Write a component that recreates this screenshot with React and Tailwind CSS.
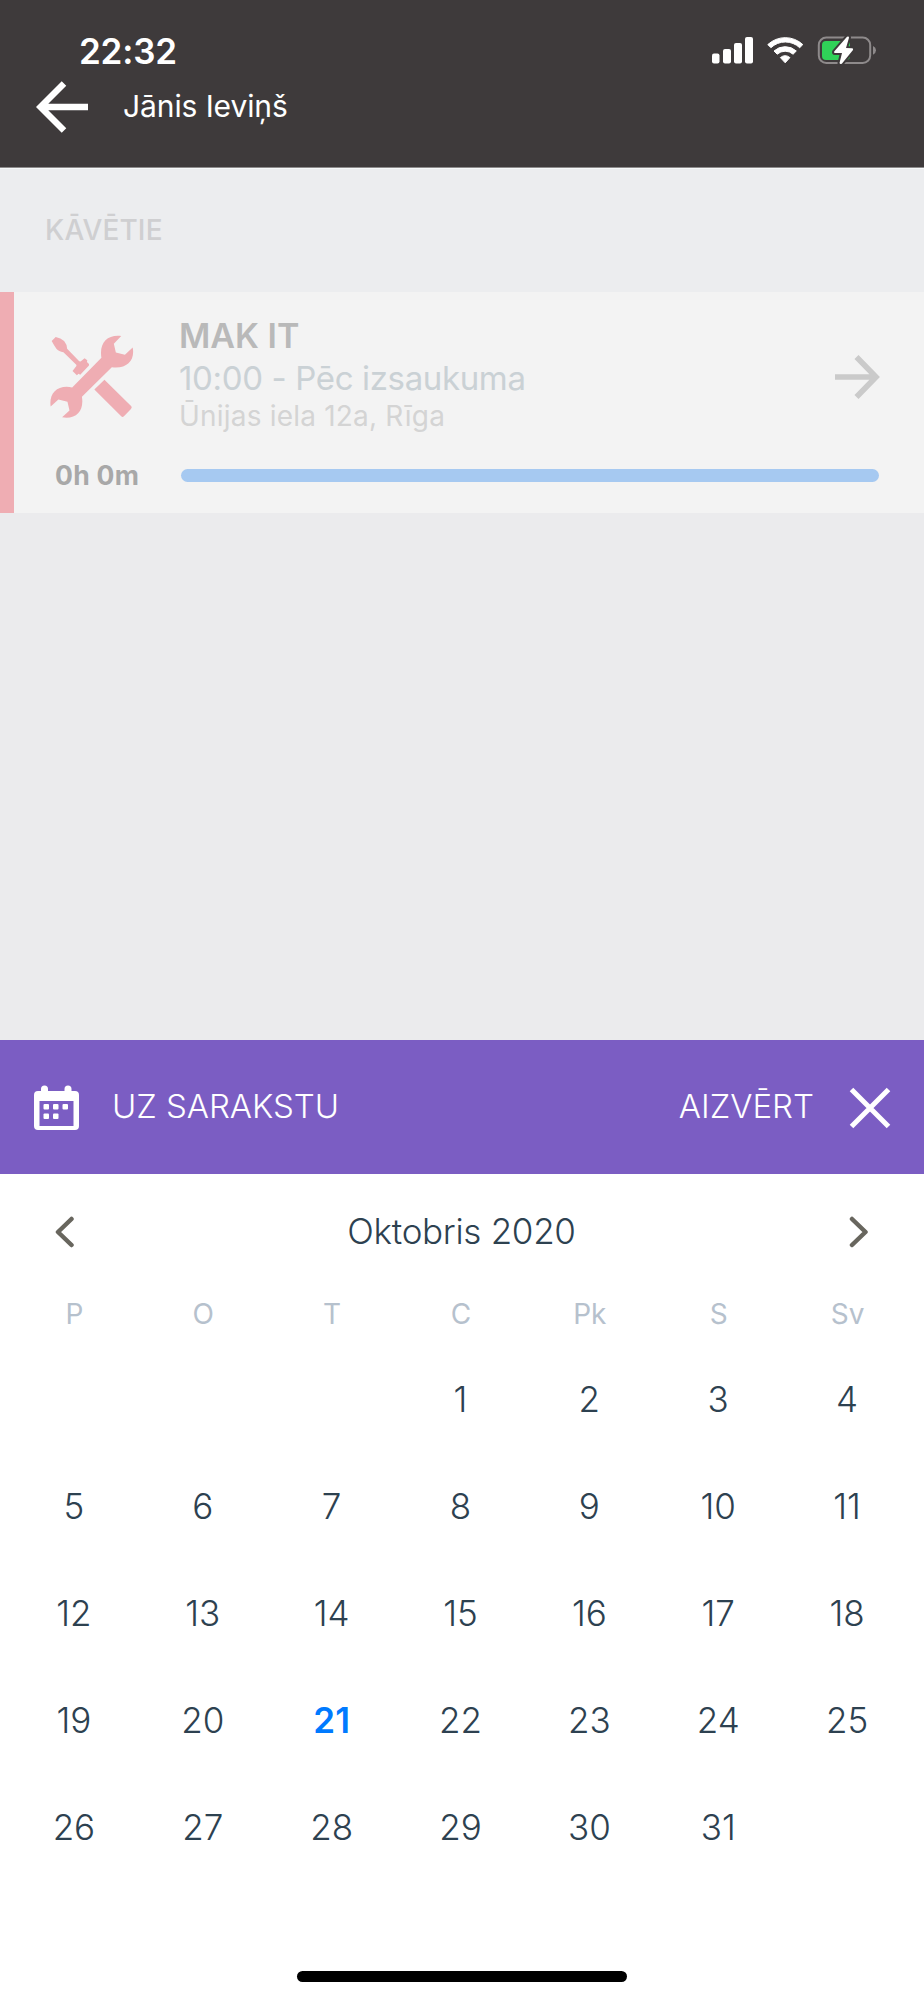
const weekdays = ['P', 'O', 'T', 'C', 'Pk', 'S', 'Sv'];
const days = [null, null, null, ...Array.from({ length: 31 }, (_, i) => i + 1), null];

function StatusIcons() {
  return (
    <svg className="h-[30px] w-[166px]" viewBox="711 36 166 30" fill="none">
      <g fill="#fff">
        <rect x="712" y="53.5" width="7.5" height="10" rx="2" />
        <rect x="723" y="49" width="8" height="14.5" rx="2" />
        <rect x="734" y="43" width="8" height="20.5" rx="2" />
        <rect x="745" y="37" width="8" height="26.5" rx="2" />
      </g>
      <path d="M767.8 44.6 A25.5 25.5 0 0 1 802.8 44.6 L799.7 47.7 A21 21 0 0 0 770.9 47.7 Z" fill="#fff" stroke="#fff" strokeWidth="1" strokeLinejoin="round" />
      <path d="M774 51 A16.5 16.5 0 0 1 796.3 51 L793.1 54.2 A12 12 0 0 0 777.2 54.2 Z" fill="#fff" stroke="#fff" strokeWidth="1" strokeLinejoin="round" />
      <path d="M780.4 57.6 A7.5 7.5 0 0 1 789.9 57.6 L785.2 62.8 Z" fill="#fff" stroke="#fff" strokeWidth="1" strokeLinejoin="round" />
      <rect x="818.8" y="37.6" width="51.4" height="25.4" rx="7.5" stroke="#8e8a8b" strokeWidth="2" />
      <path d="M873 46 Q876 47.5 876 50.3 Q876 53.2 873 54.7 Z" fill="#8e8a8b" />
      <rect x="822" y="41" width="28" height="19" rx="4" fill="#30d158" />
      <path d="M847 36.8 L834.2 51.6 Q833.6 53 835 53 L842 53 L839.500 63 Q840.2 64.6 842 63.4 L853 50 Q853.4 48.4 852 48.2 L846 48 L849 37.8 Q849 35.8 847 36.8 Z" fill="#fff" stroke="#3e3a3b" strokeWidth="4" paintOrder="stroke" />
    </svg>
  );
}

function ToolsIcon() {
  return (
    <svg className="h-[84px] w-[84px]" viewBox="150 166 250 250" fill="#efadb3">
      <path d="M216 322 L303 234 C296 190 320 164 362 169 L340 192 L346 218 L373 225 L396 203 C404 242 378 268 334 262 L245 350 C252 392 228 418 186 411 L208 391 L202 365 L175 358 L152 379 C146 340 172 313 216 322 Z" />
      <path d="M155 184 L167 172 Q182 175 192 184 Q201 195 201 207 L237 244 L241 245 L253 235 L261 241 L260 246 L266 252 L266 257 L240 284 L235 281 L230 286 L217 273 L228 259 L229 255 L190 217 Q176 216 169 207 Q162 197 155 184 Z" />
      <path d="M312 299 L392 378 Q395 382 391 386 L370 408 Q366 412 362 408 L282 328 Z" />
    </svg>
  );
}

export default function App() {
  return (
    <div className="flex h-[2000px] w-[924px] flex-col overflow-hidden bg-white font-['Inter','Liberation_Sans',sans-serif]">
      <header className="h-[168px] shrink-0 border-b border-[#8d8b8c] bg-[#3e3a3b] pt-[29px] text-white">
        <div className="flex h-[44px] items-center justify-between pr-[47px] pl-[79px]">
          <span className="text-[35px] leading-[44px] font-semibold tracking-[-0.2px]">22:32</span>
          <StatusIcons />
        </div>
        <div className="flex h-[68px] items-center pl-[36px]">
          <svg className="h-[54px] w-[54px]" viewBox="0 0 54 54" fill="none" stroke="#fff" strokeWidth="6.4">
            <path d="M28 3.500 L4.500 27 L28 50.500 M4.500 27 H52" />
          </svg>
          <span className="mb-[3px] ml-[33px] text-[30px] leading-[40px] tracking-[-0.1px] whitespace-nowrap">Jānis Ieviņš</span>
        </div>
      </header>

      <section className="flex h-[124px] shrink-0 items-center border-t border-[#f6f8f9] bg-[#ecedef] pb-[2px] pl-[45px]">
        <h2 className="text-[28px] leading-[36px] font-medium tracking-[0.15px] text-[#cfcfd1]">KĀVĒTIE</h2>
      </section>

      <article className="flex h-[221px] shrink-0 border-l-[14px] border-[#efadb3] bg-[#f3f3f3] pt-[23px]">
        <div className="flex w-[165px] flex-col items-start">
          <div className="mt-[20px] ml-[36px]"><ToolsIcon /></div>
          <span className="mt-[39px] ml-[41px] text-[26.500px] leading-[34px] font-bold tracking-[0.3px] whitespace-nowrap text-[#a8a8a8]">0h 0m</span>
        </div>
        <div className="flex w-[701px] flex-col">
          <div className="flex items-center justify-between">
            <div className="flex flex-col whitespace-nowrap">
              <span className="text-[34px] leading-[42px] font-semibold text-[#b9b9b9]">MAK IT</span>
              <span className="text-[33px] leading-[42px] tracking-[-0.36px] text-[#cad1d5]">10:00 - Pēc izsaukuma</span>
              <span className="text-[28px] leading-[34px] tracking-[0.2px] text-[#d4d4d4]">Ūnijas iela 12a, Rīga</span>
            </div>
            <svg className="mt-[5px] h-[46px] w-[46px]" viewBox="0 0 46 46" fill="none" stroke="#cacaca" strokeWidth="5.6">
              <path d="M22.500 3 L42 23 L22.500 43 M1 23 H42" />
            </svg>
          </div>
          <div className="mt-[36px] ml-[2px] h-[13px] w-[698px] rounded-full bg-[#a6c9f1]" />
        </div>
      </article>

      <div className="flex-1 bg-[#ebebed]" />

      <div className="flex h-[134px] shrink-0 items-center bg-[#7b5dc3] text-[33px] leading-[42px] font-light text-white">
        <svg className="ml-[34px] h-[45px] w-[45px]" viewBox="0 0 45 45">
          <path fillRule="evenodd" fill="#fff" d="M4 6 H7 V4 A3.500 3.500 0 0 1 14 4 V6 H30.500 V4 A3.500 3.500 0 0 1 37.500 4 V6 H41 A4 4 0 0 1 45 10 V41 A4 4 0 0 1 41 45 H4 A4 4 0 0 1 0 41 V10 A4 4 0 0 1 4 6 Z M5.500 16 V41 H39.500 V16 Z" />
          <g fill="#fff">
            <rect x="9.500" y="19" width="5.500" height="5.500" rx="1" />
            <rect x="19" y="19" width="5.500" height="5.500" rx="1" />
            <rect x="28.500" y="19" width="5.500" height="5.500" rx="1" />
            <rect x="9.500" y="28.500" width="5.500" height="5.500" rx="1" />
            <rect x="19" y="28.500" width="5.500" height="5.500" rx="1" />
          </g>
        </svg>
        <span className="mb-[2px] ml-[33px] tracking-[-0.05px] whitespace-nowrap">UZ SARAKSTU</span>
        <span className="mb-[2px] ml-auto whitespace-nowrap">AIZVĒRT</span>
        <svg className="mt-[1px] mr-[33.500px] ml-[34.500px] h-[42px] w-[42px]" viewBox="0 0 42 42" fill="none" stroke="#fff" strokeWidth="5">
          <path d="M2.500 2.500 L39.500 39.500 M39.500 2.500 L2.500 39.500" />
        </svg>
      </div>

      <div className="flex h-[826px] shrink-0 flex-col bg-white">
        <div className="mt-[33px] flex h-[48px] items-center justify-between pr-[55px] pl-[54px]">
          <svg className="mt-[1px] h-[32px] w-[20px]" viewBox="0 0 20 32" fill="none" stroke="#68665e" strokeWidth="4.500" strokeLinecap="round" strokeLinejoin="round">
            <path d="M17.500 3 L4 16 L17.500 29" />
          </svg>
          <span className="text-[35px] leading-[44px] font-light tracking-[-0.3px] text-[#2d4150]">Oktobris 2020</span>
          <svg className="mt-[1px] h-[32px] w-[20px]" viewBox="0 0 20 32" fill="none" stroke="#68665e" strokeWidth="4.500" strokeLinecap="round" strokeLinejoin="round">
            <path d="M3 3 L16.500 16 L3 29" />
          </svg>
        </div>
        <div className="mt-[41px] grid grid-cols-7 pr-[12px] pl-[10px] text-center text-[28px] leading-[36px] text-[#b6c1cd]">
          {weekdays.map((d) => <span key={d}>{d}</span>)}
        </div>
        <div className="mt-[13px] grid auto-rows-[107px] grid-cols-7 pr-[12.500px] pl-[9.500px] text-center text-[35px] leading-[44px] font-light text-[#2d4150]">
          {days.map((d, i) => (
            <div key={i} className="pt-[32px]">
              <span className={d === 21 ? 'font-semibold text-[#007aff]' : ''}>{d}</span>
            </div>
          ))}
        </div>
        <div className="mx-auto mt-auto mb-[18px] h-[11px] w-[330px] rounded-full bg-black" />
      </div>
    </div>
  );
}
